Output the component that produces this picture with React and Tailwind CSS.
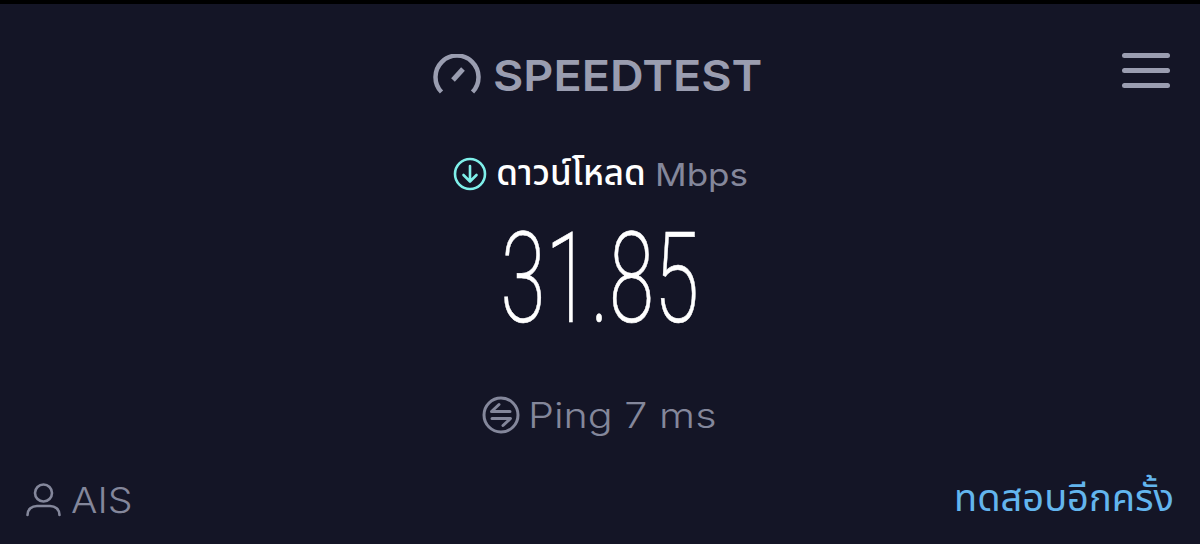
const thaiFont = "[font-family:'Noto_Sans_Thai','Noto_Sans','DejaVu_Sans',sans-serif]";

function GaugeLogo() {
  return (
    <svg width="48" height="42" viewBox="0 0 48 42" fill="none" stroke="#9a9db0" strokeLinecap="butt">
      <path d="M8.5 38 A21.5 21.5 0 1 1 39.5 38" strokeWidth="4.5" />
      <path d="M20 26 L30 15" strokeWidth="5" />
    </svg>
  );
}

export default function App() {
  return (
    <div className="w-[1200px] h-[544px] overflow-hidden bg-[#141526] border-t-[4px] border-black flex flex-col font-['Inter',sans-serif]">
      {/* Header */}
      <div className="grid grid-cols-[1fr_auto_1fr] items-center pt-[47px] pr-[30px] h-[94px]">
        <div />
        <div className="flex items-center gap-[12px] ml-[24px]">
          <GaugeLogo />
          <span className="inline-block w-[269px] origin-left scale-x-[1.085] text-[43px] leading-none font-semibold text-[#9a9db0] whitespace-nowrap mt-[2px]">SPEEDTEST</span>
        </div>
        <div className="flex flex-col gap-[10px] justify-self-end -mt-[9px]">
          <div className="w-[48px] h-[5px] rounded-full bg-[#9a9db0]" />
          <div className="w-[48px] h-[5px] rounded-full bg-[#9a9db0]" />
          <div className="w-[48px] h-[5px] rounded-full bg-[#9a9db0]" />
        </div>
      </div>

      {/* Result */}
      <div className="flex flex-col items-center">
        <div className="flex items-center gap-[9px] mt-[56px] h-[40px]">
          <svg width="34" height="34" viewBox="0 0 34 34" fill="none" stroke="#7ff0ea" strokeWidth="2.6" strokeLinecap="round" strokeLinejoin="round">
            <circle cx="17" cy="17" r="15" />
            <path d="M17 9 V24 M10.5 18 L17 24.5 L23.5 18" />
          </svg>
          <span className={`text-[35px] leading-none font-medium text-white ${thaiFont}`}>ดาวน์โหลด</span>
          <span className="inline-block w-[92px] origin-left scale-x-[1.13] text-[31px] leading-none text-[#84879b] whitespace-nowrap">Mbps</span>
        </div>
        <div className="mt-[25px] h-[120px] flex items-center justify-center">
          <span className="inline-block text-[126px] leading-none font-extralight text-white font-['Roboto',sans-serif] scale-x-[0.65] [-webkit-text-stroke:0.6px_white]">31.85</span>
        </div>
        <div className="flex items-center gap-[8px] mt-[54px] h-[44px] -ml-[3px]">
          <svg width="38" height="38" viewBox="0 0 38 38" fill="none" stroke="#84879b" strokeWidth="3" strokeLinecap="round" strokeLinejoin="round">
            <circle cx="19" cy="19" r="17" />
            <path d="M28 15.5 H9.5 L17 8.5 M10 22.5 H28.5 L21 29.5" />
          </svg>
          <span className="inline-block w-[187px] origin-left scale-x-[1.18] text-[35px] leading-none font-light text-[#84879b] whitespace-nowrap">Ping 7 ms</span>
        </div>
      </div>

      {/* Footer */}
      <div className="flex justify-between items-center px-[26px] mt-[44px]">
        <div className="flex items-center gap-[10px] text-[#84879b]">
          <svg width="35" height="34" viewBox="0 0 35 34" fill="none" stroke="currentColor" strokeWidth="2.6" strokeLinecap="round">
            <circle cx="17.5" cy="10" r="8.5" />
            <path d="M1.5 32 C1.5 26 6 23 11 23 H24 C29 23 33.5 26 33.5 32" />
          </svg>
          <span className="inline-block w-[60px] origin-left scale-x-[1.09] text-[36px] leading-none font-light whitespace-nowrap">AIS</span>
        </div>
        <span className={`text-[38px] leading-none font-normal text-[#63b5ee] ${thaiFont}`}>ทดสอบอีกครั้ง</span>
      </div>
    </div>
  );
}
